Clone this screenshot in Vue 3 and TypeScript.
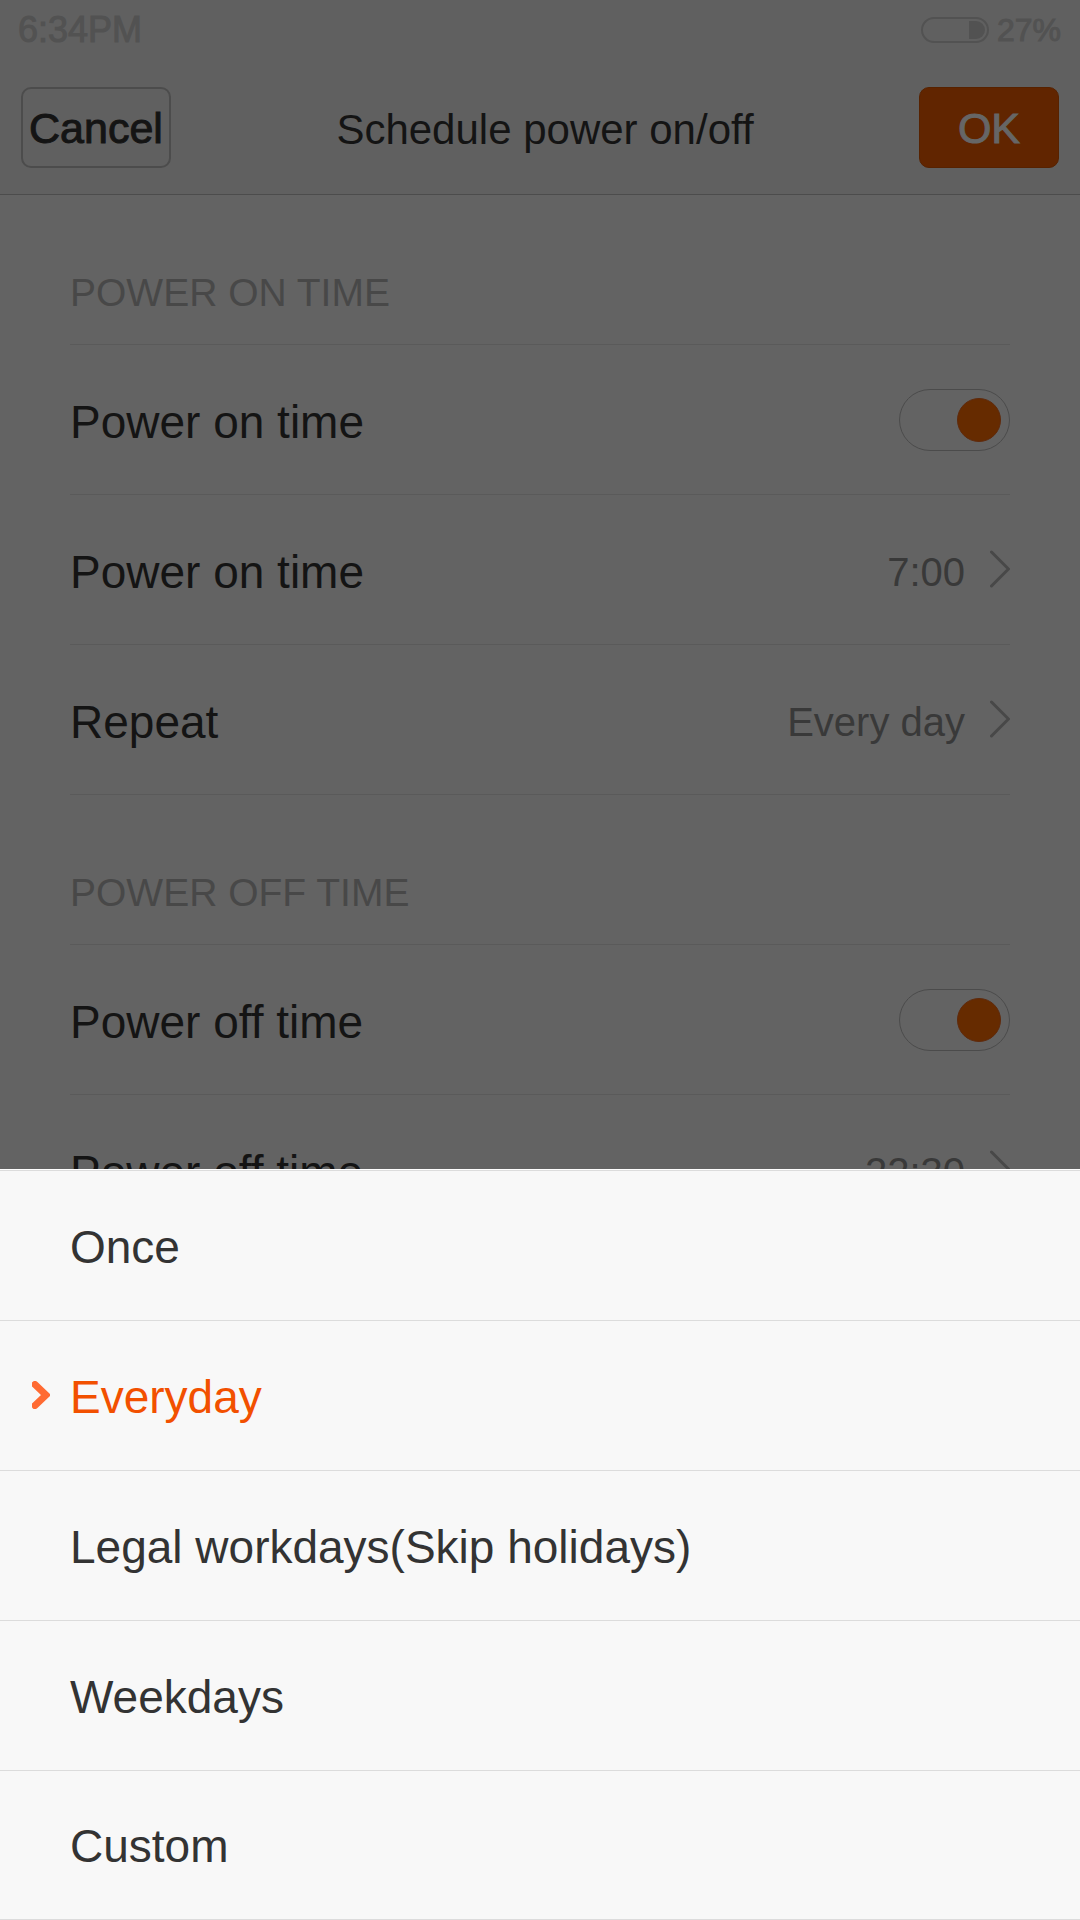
<script setup lang="ts">
import { ref } from 'vue'

interface Section {
  id: string
  title: string
  label: string
  time: string
  repeat?: string
  enabled: boolean
}

const sections = ref<Section[]>([
  { id: 'on', title: 'POWER ON TIME', label: 'Power on time', time: '7:00', repeat: 'Every day', enabled: true },
  { id: 'off', title: 'POWER OFF TIME', label: 'Power off time', time: '22:30', enabled: true },
])

const options = ['Once', 'Everyday', 'Legal workdays(Skip holidays)', 'Weekdays', 'Custom']
const selected = ref('Everyday')
</script>

<template>
  <div class="page">
    <div class="screen">
      <div class="status">
        <span class="clock">6:34PM</span>
        <span class="battery">
          <svg width="68" height="26" viewBox="0 0 68 26" aria-hidden="true">
            <rect x="1" y="1" width="66" height="24" rx="12" fill="none" stroke="#525252" stroke-width="2" />
            <path d="M48 4h7a9 9 0 0 1 0 18h-7z" fill="#525252" />
          </svg>
          <span class="level">27%</span>
        </span>
      </div>

      <header class="bar">
        <button type="button" class="btn cancel">Cancel</button>
        <h1 class="title">Schedule power on/off</h1>
        <button type="button" class="btn ok">OK</button>
      </header>

      <main class="settings">
        <section v-for="s in sections" :key="s.id">
          <h2 class="heading">{{ s.title }}</h2>
          <label class="row">
            <span class="name">{{ s.label }}</span>
            <input v-model="s.enabled" type="checkbox" class="toggle" />
          </label>
          <button type="button" class="row">
            <span class="name">{{ s.label }}</span>
            <span class="value">{{ s.time }}</span>
            <svg class="chevron" width="20" height="38" viewBox="0 0 20 38" aria-hidden="true">
              <path d="M1.500 2 18.500 19 1.500 36" />
            </svg>
          </button>
          <button v-if="s.repeat" type="button" class="row">
            <span class="name">Repeat</span>
            <span class="value">{{ s.repeat }}</span>
            <svg class="chevron" width="20" height="38" viewBox="0 0 20 38" aria-hidden="true">
              <path d="M1.500 2 18.500 19 1.500 36" />
            </svg>
          </button>
        </section>
      </main>
    </div>

    <div class="sheet" role="radiogroup" aria-label="Repeat">
      <label v-for="o in options" :key="o" class="option" :class="{ active: o === selected }">
        <input v-model="selected" type="radio" name="repeat" :value="o" class="radio" />
        <span class="mark">
          <svg v-if="o === selected" width="18" height="28" viewBox="0 0 18 28" aria-hidden="true">
            <path d="M3 3.500 14 14 3 24.500" />
          </svg>
        </span>
        <span class="choice">{{ o }}</span>
      </label>
    </div>
  </div>
</template>

<style>
body {
  margin: 0;
}
</style>

<style scoped>
.page {
  display: flex;
  flex-direction: column;
  height: 100vh;
  background: #636363;
  color: #141414;
  font-family: "Liberation Sans", Arial, sans-serif;
}

button {
  font-family: inherit;
  color: inherit;
}

.screen {
  flex: 1;
  min-height: 0;
  overflow: hidden;
}

.status {
  display: flex;
  align-items: center;
  justify-content: space-between;
  box-sizing: border-box;
  height: 62px;
  padding: 0 19px 2px 18px;
  background: #606060;
  color: #525252;
}

.clock {
  font-size: 36px;
  -webkit-text-stroke: 1px currentColor;
}

.battery {
  display: flex;
  align-items: center;
  gap: 8px;
}

.battery svg {
  display: block;
}

.level {
  font-size: 32px;
  -webkit-text-stroke: 1px currentColor;
}

.bar {
  display: flex;
  align-items: center;
  padding: 25px 21px 26px;
  border-bottom: 1px solid #4c4c4c;
  background: #606060;
}

.btn {
  box-sizing: border-box;
  height: 81px;
  padding: 2px 0 0;
  border-radius: 10px;
  font-size: 43px;
  -webkit-text-stroke: 1px currentColor;
}

.cancel {
  width: 150px;
  border: 2px solid #4c4c4c;
  background: transparent;
}

.ok {
  width: 140px;
  border: 1px solid #572200;
  background: #612500;
  color: #666666;
}

.title {
  flex: 1;
  margin: 0;
  padding-top: 4px;
  text-align: center;
  font-size: 42px;
  font-weight: 400;
}

.settings {
  padding: 0 70px;
}

.heading {
  box-sizing: border-box;
  margin: 0;
  padding: 75px 0 28px;
  border-bottom: 1px solid #5a5a5a;
  color: #484848;
  font-size: 39px;
  font-weight: 400;
  line-height: 46px;
}

.row {
  display: flex;
  align-items: center;
  box-sizing: border-box;
  width: 100%;
  height: 150px;
  padding: 0;
  border: 0;
  border-bottom: 1px solid #5a5a5a;
  background: transparent;
  text-align: left;
}

.name {
  flex: 1;
  padding-top: 4px;
  font-size: 46px;
}

.value {
  padding-top: 6px;
  margin-right: 25px;
  color: #393939;
  font-size: 40px;
}

.chevron {
  display: block;
  margin-bottom: 2px;
  fill: none;
  stroke: #484848;
  stroke-width: 3;
  stroke-linecap: round;
}

.toggle {
  display: flex;
  align-items: center;
  appearance: none;
  box-sizing: border-box;
  width: 111px;
  height: 62px;
  margin: 0;
  padding: 0 8px;
  border: 1px solid #4b4b4b;
  border-radius: 31px;
}

.toggle::before {
  content: "";
  box-sizing: border-box;
  width: 44px;
  height: 44px;
  border: 1px solid #5f2a0c;
  border-radius: 50%;
  background: #4b4b4b;
}

.toggle:checked {
  justify-content: flex-end;
}

.toggle:checked::before {
  background: #662b00;
}

.sheet {
  border-top: 1px solid #ffffff;
  background: #f8f8f8;
  color: #333333;
}

.option {
  display: flex;
  align-items: center;
  position: relative;
  box-sizing: border-box;
  height: 150px;
  border-bottom: 1px solid #dcdcdc;
}

.option:first-child {
  height: 151px;
  border-top: 1px solid #dcdcdc;
}

.option:last-child {
  height: 149px;
}

.radio {
  position: absolute;
  inset: 0;
  margin: 0;
  appearance: none;
}

.mark {
  box-sizing: border-box;
  width: 70px;
  padding: 0 0 2px 32px;
}

.mark svg {
  display: block;
  fill: none;
  stroke: #ff6b33;
  stroke-width: 7;
  stroke-linecap: round;
}

.choice {
  padding-top: 2px;
  font-size: 46px;
}

.active {
  color: #f25000;
}
</style>
